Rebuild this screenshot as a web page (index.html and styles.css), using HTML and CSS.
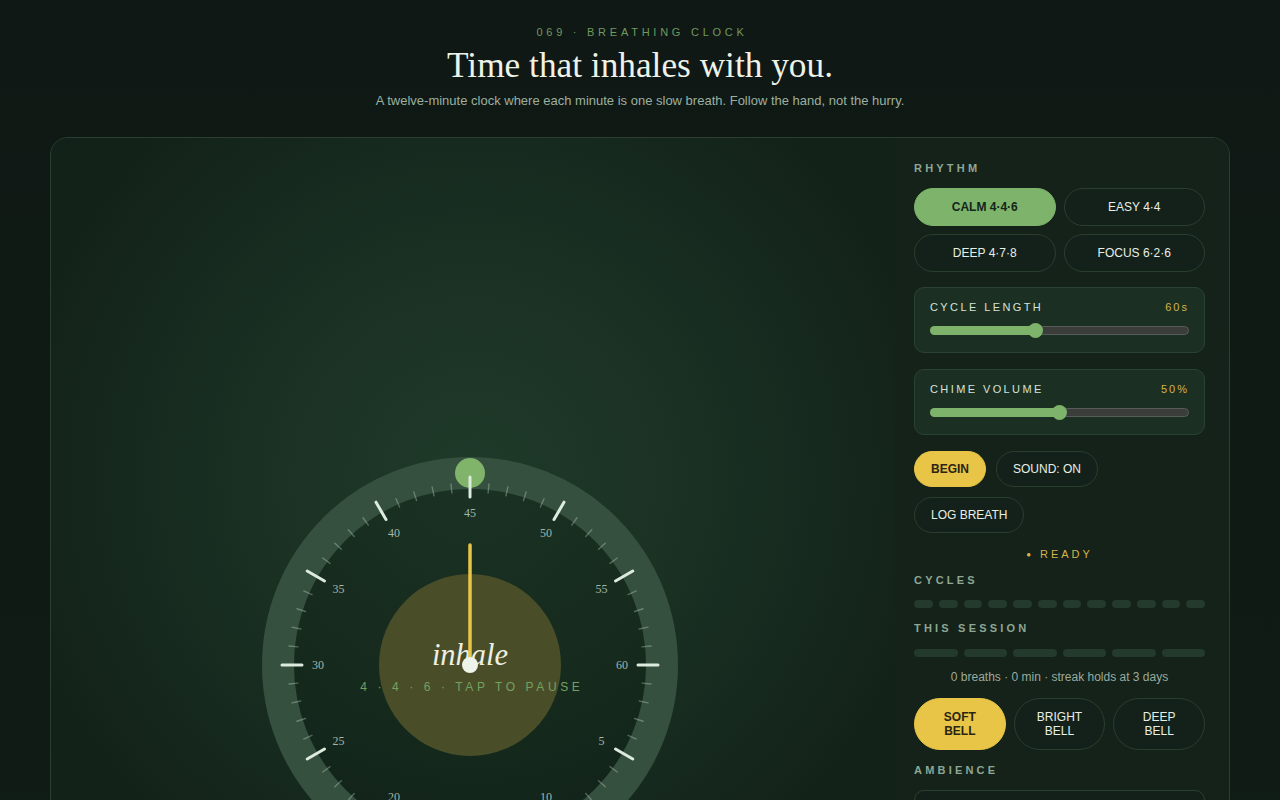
FILE: index.html
```html
<!DOCTYPE html>
<html lang="en">
<head>
<meta charset="utf-8">
<title>Breathing Clock</title>
<link rel="stylesheet" href="styles.css">
</head>
<body>
<header class="hero">
  <div class="eyebrow">069 · BREATHING CLOCK</div>
  <h1 class="title">Time that inhales with you.</h1>
  <p class="subtitle">A twelve-minute clock where each minute is one slow breath. Follow the hand, not the hurry.</p>
</header>

<main class="card">
  <section class="stage">
    <svg class="dial" viewBox="-220 -220 440 440" width="440" height="440">
      <circle class="ring" r="192"/>
      <circle class="face" r="176"/>
      <circle class="marker" cy="-192" r="15"/>
      <g class="minor">
        <line y1="-173" y2="-182" transform="rotate(6)"/><line y1="-173" y2="-182" transform="rotate(12)"/><line y1="-173" y2="-182" transform="rotate(18)"/><line y1="-173" y2="-182" transform="rotate(24)"/>
        <line y1="-173" y2="-182" transform="rotate(36)"/><line y1="-173" y2="-182" transform="rotate(42)"/><line y1="-173" y2="-182" transform="rotate(48)"/><line y1="-173" y2="-182" transform="rotate(54)"/>
        <line y1="-173" y2="-182" transform="rotate(66)"/><line y1="-173" y2="-182" transform="rotate(72)"/><line y1="-173" y2="-182" transform="rotate(78)"/><line y1="-173" y2="-182" transform="rotate(84)"/>
        <line y1="-173" y2="-182" transform="rotate(96)"/><line y1="-173" y2="-182" transform="rotate(102)"/><line y1="-173" y2="-182" transform="rotate(108)"/><line y1="-173" y2="-182" transform="rotate(114)"/>
        <line y1="-173" y2="-182" transform="rotate(126)"/><line y1="-173" y2="-182" transform="rotate(132)"/><line y1="-173" y2="-182" transform="rotate(138)"/><line y1="-173" y2="-182" transform="rotate(144)"/>
        <line y1="-173" y2="-182" transform="rotate(156)"/><line y1="-173" y2="-182" transform="rotate(162)"/><line y1="-173" y2="-182" transform="rotate(168)"/><line y1="-173" y2="-182" transform="rotate(174)"/>
        <line y1="-173" y2="-182" transform="rotate(186)"/><line y1="-173" y2="-182" transform="rotate(192)"/><line y1="-173" y2="-182" transform="rotate(198)"/><line y1="-173" y2="-182" transform="rotate(204)"/>
        <line y1="-173" y2="-182" transform="rotate(216)"/><line y1="-173" y2="-182" transform="rotate(222)"/><line y1="-173" y2="-182" transform="rotate(228)"/><line y1="-173" y2="-182" transform="rotate(234)"/>
        <line y1="-173" y2="-182" transform="rotate(246)"/><line y1="-173" y2="-182" transform="rotate(252)"/><line y1="-173" y2="-182" transform="rotate(258)"/><line y1="-173" y2="-182" transform="rotate(264)"/>
        <line y1="-173" y2="-182" transform="rotate(276)"/><line y1="-173" y2="-182" transform="rotate(282)"/><line y1="-173" y2="-182" transform="rotate(288)"/><line y1="-173" y2="-182" transform="rotate(294)"/>
        <line y1="-173" y2="-182" transform="rotate(306)"/><line y1="-173" y2="-182" transform="rotate(312)"/><line y1="-173" y2="-182" transform="rotate(318)"/><line y1="-173" y2="-182" transform="rotate(324)"/>
        <line y1="-173" y2="-182" transform="rotate(336)"/><line y1="-173" y2="-182" transform="rotate(342)"/><line y1="-173" y2="-182" transform="rotate(348)"/><line y1="-173" y2="-182" transform="rotate(354)"/>
      </g>
      <g class="major">
        <line y1="-168" y2="-188"/><line y1="-168" y2="-188" transform="rotate(30)"/><line y1="-168" y2="-188" transform="rotate(60)"/><line y1="-168" y2="-188" transform="rotate(90)"/>
        <line y1="-168" y2="-188" transform="rotate(120)"/><line y1="-168" y2="-188" transform="rotate(150)"/><line y1="-168" y2="-188" transform="rotate(180)"/><line y1="-168" y2="-188" transform="rotate(210)"/>
        <line y1="-168" y2="-188" transform="rotate(240)"/><line y1="-168" y2="-188" transform="rotate(270)"/><line y1="-168" y2="-188" transform="rotate(300)"/><line y1="-168" y2="-188" transform="rotate(330)"/>
      </g>
      <g class="nums">
        <text x="0" y="-152">45</text>
        <text x="76" y="-131.6">50</text>
        <text x="131.6" y="-76">55</text>
        <text x="152" y="0">60</text>
        <text x="131.6" y="76">5</text>
        <text x="76" y="131.6">10</text>
        <text x="0" y="152">15</text>
        <text x="-76" y="131.6">20</text>
        <text x="-131.6" y="76">25</text>
        <text x="-152" y="0">30</text>
        <text x="-131.6" y="-76">35</text>
        <text x="-76" y="-131.6">40</text>
      </g>
      <circle class="breath" r="91"/>
      <text class="phase" x="0" y="0">inhale</text>
      <text class="pattern" x="1.8" y="22">4 · 4 · 6 · TAP TO PAUSE</text>
      <line class="hand" x1="0" y1="-120" x2="0" y2="0"/>
      <circle class="hub" r="8"/>
    </svg>
  </section>

  <aside class="panel">
    <div class="label">RHYTHM</div>
    <div class="rhythms">
      <button class="pill pill-green">CALM 4·4·6</button>
      <button class="pill">EASY 4·4</button>
      <button class="pill">DEEP 4·7·8</button>
      <button class="pill">FOCUS 6·2·6</button>
    </div>

    <div class="slider-card">
      <div class="slider-head"><span>CYCLE LENGTH</span><span class="val">60s</span></div>
      <div class="track"><div class="fill" style="width:40.5%"></div><div class="thumb" style="left:40.5%"></div></div>
    </div>

    <div class="slider-card second">
      <div class="slider-head"><span>CHIME VOLUME</span><span class="val">50%</span></div>
      <div class="track"><div class="fill" style="width:50%"></div><div class="thumb" style="left:50%"></div></div>
    </div>

    <div class="actions">
      <button class="pill pill-yellow act">BEGIN</button>
      <button class="pill act">SOUND: ON</button>
      <button class="pill act">LOG BREATH</button>
    </div>

    <div class="status"><span class="dot">●</span>READY</div>

    <div class="label label-cycles">CYCLES</div>
    <div class="dots">
      <span></span><span></span><span></span><span></span><span></span><span></span>
      <span></span><span></span><span></span><span></span><span></span><span></span>
    </div>

    <div class="label label-session">THIS SESSION</div>
    <div class="bars">
      <span></span><span></span><span></span><span></span><span></span><span></span>
    </div>

    <p class="summary">0 breaths · 0 min · streak holds at 3 days</p>

    <div class="bells">
      <button class="pill bell pill-yellow">SOFT<br>BELL</button>
      <button class="pill bell">BRIGHT<br>BELL</button>
      <button class="pill bell">DEEP<br>BELL</button>
    </div>

    <div class="label label-amb">AMBIENCE</div>
    <div class="amb-box"></div>
  </aside>
</main>
</body>
</html>
```

FILE: styles.css
```css
* { box-sizing: border-box; }

html, body {
  margin: 0;
  padding: 0;
}

body {
  background: #0f1914;
  background: linear-gradient(180deg, #0f1814 0%, #101c16 100%);
  font-family: "Liberation Sans", Arial, sans-serif;
  color: #e8efe6;
  min-height: 100vh;
}

.hero {
  text-align: center;
  padding-top: 24px;
}

.eyebrow {
  font-size: 11px;
  line-height: 16px;
  letter-spacing: 3.75px;
  color: #6f9a5f;
  padding-left: 4px;
}

.title {
  margin: 4px 0 0;
  font-family: "Liberation Serif", "Times New Roman", serif;
  font-weight: 400;
  font-size: 35.3px;
  line-height: 44px;
  color: #eef2e8;
}

.subtitle {
  margin: 4px 0 0;
  font-size: 13px;
  line-height: 18px;
  color: #9cb0a0;
}

.card {
  width: 1180px;
  margin: 27px auto 0;
  border: 1px solid #2a3f31;
  border-radius: 18px;
  overflow: hidden;
  display: grid;
  grid-template-columns: 1fr 334px;
  background: #14231a;
}

.stage {
  display: flex;
  justify-content: center;
  align-items: flex-start;
  padding: 307px 6px 40px 0;
  background:
    radial-gradient(circle 470px at 50% 340px, #1f3a2a 0%, #1b3224 40%, #16291e 75%, #132219 100%);
}

.dial { display: block; overflow: visible; }

.ring { fill: none; stroke: #35503f; stroke-width: 32; }
.face { fill: rgba(10, 24, 15, 0.22); }
.marker { fill: #80b46b; }

.minor line {
  stroke: rgba(205, 228, 212, 0.34);
  stroke-width: 1.4;
  stroke-linecap: round;
}

.major line {
  stroke: #dcebdd;
  stroke-width: 3;
  stroke-linecap: round;
}

.nums text {
  font-family: "Liberation Serif", serif;
  font-size: 12px;
  fill: #a3b6a8;
  text-anchor: middle;
  dominant-baseline: central;
}

.breath { fill: #494e29; }

.phase {
  font-family: "Liberation Serif", serif;
  font-style: italic;
  font-size: 30.5px;
  fill: #eef0e2;
  text-anchor: middle;
}

.pattern {
  font-family: "Liberation Sans", Arial, sans-serif;
  font-size: 12px;
  letter-spacing: 3.6px;
  fill: #74a061;
  text-anchor: middle;
  dominant-baseline: central;
}

.hand {
  stroke: #e8c547;
  stroke-width: 3.5;
  stroke-linecap: round;
}

.hub { fill: #eef4ea; }

/* ---------- panel ---------- */

.panel {
  background: #14221a;
  padding: 23px 24px 24px 19px;
  display: flex;
  flex-direction: column;
}

.label {
  font-size: 11px;
  line-height: 14px;
  font-weight: 700;
  letter-spacing: 3.2px;
  color: #8ea694;
}

.rhythms {
  margin-top: 13px;
  display: grid;
  grid-template-columns: 1fr 1fr;
  gap: 8px;
}

.pill {
  font-family: "Liberation Sans", Arial, sans-serif;
  font-size: 12px;
  line-height: 14px;
  color: #e8efe6;
  background: #13211a;
  border: 1px solid #2a3e30;
  border-radius: 999px;
  height: 38px;
  padding: 0 16px;
  cursor: pointer;
}

.pill-green {
  background: #7db36a;
  border-color: #7db36a;
  color: #13261a;
  font-weight: 700;
}

.pill-yellow {
  background: #e8c547;
  border-color: #e8c547;
  color: #2a2410;
  font-weight: 700;
}

.slider-card {
  margin-top: 15px;
  background: #1b2f23;
  border: 1px solid #2b4233;
  border-radius: 10px;
  padding: 12px 15px 17px;
}

.slider-card.second { margin-top: 16px; }

.slider-head {
  display: flex;
  justify-content: space-between;
  font-size: 11px;
  line-height: 14px;
  letter-spacing: 2.4px;
  color: #d6e3d7;
}

.slider-head .val {
  color: #d5b44a;
  letter-spacing: 2px;
}

.track {
  position: relative;
  margin-top: 12px;
  height: 9px;
  border-radius: 6px;
  background: #3b3d3b;
  border: 1px solid #585c58;
}

.fill {
  position: absolute;
  left: -1px;
  top: -1px;
  bottom: -1px;
  border-radius: 6px;
  background: #7db36a;
}

.thumb {
  position: absolute;
  top: 50%;
  width: 15px;
  height: 15px;
  margin: -7.5px 0 0 -7.5px;
  border-radius: 50%;
  background: #7db36a;
}

.actions {
  margin-top: 16px;
  display: flex;
  flex-wrap: wrap;
  gap: 10px;
}

.act {
  height: 36px;
  padding: 0 16px;
}

.status {
  margin-top: 14px;
  text-align: center;
  font-size: 11px;
  line-height: 14px;
  letter-spacing: 3px;
  color: #d5b44a;
}

.status .dot {
  font-size: 8px;
  margin-right: 9px;
  letter-spacing: 0;
  vertical-align: 1px;
}

.label-cycles { margin-top: 11px; }

.dots {
  margin-top: 13px;
  display: flex;
  gap: 6px;
}

.dots span {
  flex: 1;
  height: 8px;
  border-radius: 5px;
  background: #233a2c;
}

.label-session { margin-top: 13px; }

.bars {
  margin-top: 14px;
  display: flex;
  gap: 6px;
}

.bars span {
  flex: 1;
  height: 8px;
  border-radius: 5px;
  background: #233a2c;
}

.summary {
  margin: 13px 0 0;
  text-align: center;
  font-size: 12px;
  line-height: 15px;
  color: #9aab9e;
}

.bells {
  margin-top: 13px;
  display: grid;
  grid-template-columns: 1fr 1fr 1fr;
  gap: 8px;
}

.bell {
  height: 52px;
  padding: 0 8px;
}

.label-amb { margin-top: 13px; }

.amb-box {
  margin-top: 13px;
  height: 44px;
  border: 1px solid #2b4233;
  border-radius: 10px;
  background: #13201a;
}
```
